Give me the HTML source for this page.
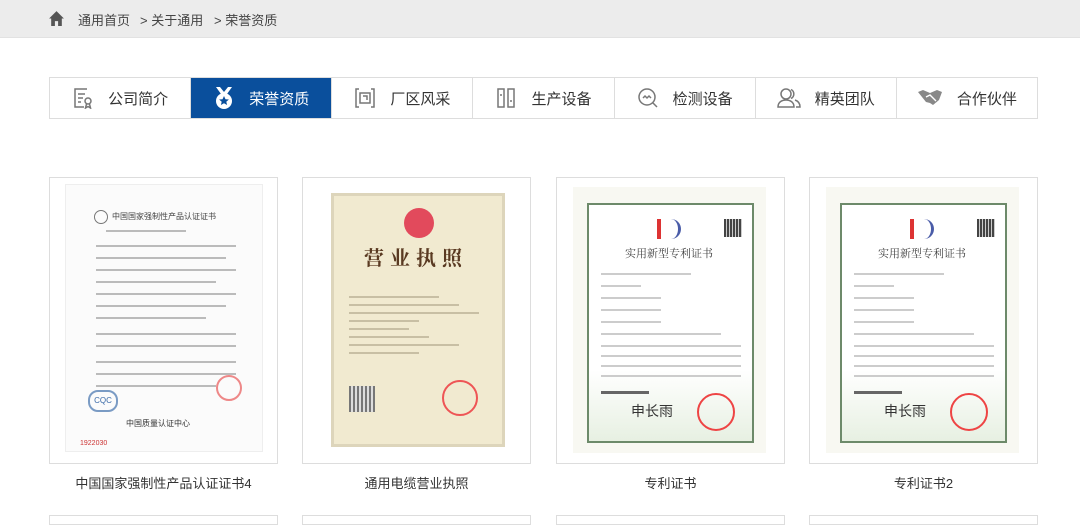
<!DOCTYPE html>
<html><head><meta charset="utf-8"><style>
*{margin:0;padding:0;box-sizing:border-box}
body{width:1080px;height:518px;overflow:hidden;background:#fff;font-family:"Liberation Sans","Noto Sans CJK SC",sans-serif;color:#333;position:relative}
.bc{position:absolute;left:0;top:0;width:1080px;height:38px;background:#ececec;border-bottom:1px solid #e2e2e2}
.bc span{position:absolute;top:10px;font-size:13px;color:#444}
.tabs{position:absolute;left:49px;top:77px;width:989px;height:42px;border:1px solid #ddd;display:flex}
.tab{flex:1;border-right:1px solid #ddd;display:flex;align-items:center;justify-content:center;font-size:15px;color:#333;gap:14px}
.tab:last-child{border-right:none}
.tab.on{background:#0a4f9c;color:#fff}
.card{position:absolute;top:177px;width:229px;height:287px;border:1px solid #ddd;overflow:hidden}
.cap{position:absolute;top:473px;width:229px;text-align:center;font-size:13px;color:#333}
.ln{position:absolute;height:2px;background:#bbb}
.bot{position:absolute;top:515px;width:229px;height:10px;border:1px solid #ddd}
</style></head><body>
<div class="bc">
<svg style="position:absolute;left:48px;top:10px" width="17" height="17" viewBox="0 0 16 16"><path d="M8 1 L1 8 H3 V15 H6.5 V10.5 H9.5 V15 H13 V8 H15 Z" fill="#555"/></svg>
<span style="left:78px">通用首页</span><span style="left:140px">&gt; 关于通用</span><span style="left:214px">&gt; 荣誉资质</span>
</div>
<div class="tabs">
<div class="tab"><svg width="22" height="22" viewBox="0 0 22 22" fill="none" stroke="#777" stroke-width="1.5"><path d="M15 2H3v18h9"/><path d="M6 7h7M6 11h5M6 15h3"/><circle cx="16" cy="14" r="3"/><path d="M14.5 17l-1 4 2.5-1.5 2.5 1.5-1-4"/></svg>公司简介</div>
<div class="tab on"><svg width="22" height="24" viewBox="0 0 22 24"><path d="M3 1l5 7h6l5-7h-4l-4 5-4-5z" fill="#fff"/><circle cx="11" cy="15" r="8" fill="#fff"/><path d="M11 10l1.5 3.2 3.4.3-2.6 2.2.8 3.3-3.1-1.8-3.1 1.8.8-3.3-2.6-2.2 3.4-.3z" fill="#0a4f9c"/></svg>荣誉资质</div>
<div class="tab"><svg width="22" height="22" viewBox="0 0 22 22" fill="none" stroke="#777" stroke-width="1.5"><path d="M5 2H2v18h3M17 2h3v18h-3"/><rect x="6" y="6" width="10" height="10"/><path d="M9 9h4v4"/></svg>厂区风采</div>
<div class="tab"><svg width="22" height="22" viewBox="0 0 22 22" fill="none" stroke="#777" stroke-width="1.5"><rect x="3" y="2" width="6" height="18"/><rect x="13" y="2" width="6" height="18"/><path d="M5 8h2M15 14h2"/></svg>生产设备</div>
<div class="tab"><svg width="22" height="22" viewBox="0 0 22 22" fill="none" stroke="#777" stroke-width="1.5"><circle cx="10" cy="10" r="8"/><path d="M16 16l4 4M6 11l2-2 2 2 2-2 2 2"/></svg>检测设备</div>
<div class="tab"><svg width="24" height="22" viewBox="0 0 24 22" fill="none" stroke="#777" stroke-width="1.5"><circle cx="9" cy="7" r="5"/><path d="M1 20c0-5 4-7 8-7s8 2 8 7z"/><path d="M14 2.5a5 5 0 010 9M18 13c3 1 5 3 5 7h-4"/></svg>精英团队</div>
<div class="tab"><svg width="26" height="20" viewBox="0 0 26 20"><path d="M1 4l5-2 7 3 7-3 5 2-3 8-6 5-3-2-4-1z" fill="#888"/><path d="M9 9l4-2 6 6" stroke="#fff" stroke-width="1.4" fill="none"/></svg>合作伙伴</div>
</div>

<div class="card" style="left:49px">
<div style="position:absolute;left:15px;top:6px;width:198px;height:268px;background:#fbfbfb;border:1px solid #eee">
<div style="position:absolute;left:28px;top:25px;width:14px;height:14px;border-radius:50%;border:1px solid #777"></div>
<div style="position:absolute;left:46px;top:26px;font-size:8px;color:#444">中国国家强制性产品认证证书</div>
<div class="ln" style="left:40px;top:45px;width:80px"></div>
<div class="ln" style="left:30px;top:60px;width:140px"></div><div class="ln" style="left:30px;top:72px;width:130px"></div>
<div class="ln" style="left:30px;top:84px;width:140px"></div><div class="ln" style="left:30px;top:96px;width:120px"></div>
<div class="ln" style="left:30px;top:108px;width:140px"></div><div class="ln" style="left:30px;top:120px;width:130px"></div>
<div class="ln" style="left:30px;top:132px;width:110px"></div><div class="ln" style="left:30px;top:148px;width:140px"></div>
<div class="ln" style="left:30px;top:160px;width:140px"></div><div class="ln" style="left:30px;top:176px;width:140px"></div>
<div class="ln" style="left:30px;top:188px;width:140px"></div><div class="ln" style="left:30px;top:200px;width:120px"></div>
<div style="position:absolute;left:22px;top:205px;width:30px;height:22px;border:2px solid #7a9bc4;border-radius:10px;font-size:8px;color:#3a6aa8;text-align:center;line-height:18px">CQC</div>
<div style="position:absolute;left:150px;top:190px;width:26px;height:26px;border-radius:50%;border:2px solid #e88"></div>
<div style="position:absolute;left:60px;top:233px;font-size:8px;color:#333">中国质量认证中心</div>
<div style="position:absolute;left:14px;top:255px;font-size:7px;color:#c33">1922030</div>
</div></div>

<div class="card" style="left:302px">
<div style="position:absolute;left:28px;top:15px;width:174px;height:254px;background:#f1ead0;border:3px solid #ddd5bb">
<div style="position:absolute;left:70px;top:12px;width:30px;height:30px;border-radius:50%;background:#e24a5c"></div>
<div style="position:absolute;left:30px;top:46px;font-size:20px;font-weight:bold;color:#5a3a22;letter-spacing:6px;font-family:'Noto Serif CJK SC',serif">营业执照</div>
<div class="ln" style="left:15px;top:100px;width:90px;background:#c8bfa4"></div><div class="ln" style="left:15px;top:108px;width:110px;background:#c8bfa4"></div>
<div class="ln" style="left:15px;top:116px;width:130px;background:#c8bfa4"></div><div class="ln" style="left:15px;top:124px;width:70px;background:#c8bfa4"></div>
<div class="ln" style="left:15px;top:132px;width:60px;background:#c8bfa4"></div><div class="ln" style="left:15px;top:140px;width:80px;background:#c8bfa4"></div>
<div class="ln" style="left:15px;top:148px;width:110px;background:#c8bfa4"></div><div class="ln" style="left:15px;top:156px;width:70px;background:#c8bfa4"></div>
<div style="position:absolute;left:15px;top:190px;width:26px;height:26px;background:repeating-linear-gradient(90deg,#777 0 2px,#ddd 2px 4px)"></div>
<div style="position:absolute;left:108px;top:184px;width:36px;height:36px;border-radius:50%;border:2px solid #e55"></div>
</div></div>

<div class="card" style="left:556px">
<div style="position:absolute;left:16px;top:9px;width:193px;height:266px;background:#f8f8f2">
<div style="position:absolute;left:14px;top:16px;width:167px;height:240px;border:2px solid #6d8a6a;background:linear-gradient(#fff 70%,#e7f0e2)">
<div style="position:absolute;left:68px;top:14px;width:24px;height:20px;border-left:4px solid #d33;border-radius:0 12px 12px 0;border-right:3px solid #4a5ca8"></div>
<div style="position:absolute;right:10px;top:14px;width:18px;height:18px;background:repeating-linear-gradient(90deg,#444 0 2px,#ccc 2px 3px)"></div>
<div style="position:absolute;left:36px;top:40px;font-size:11px;color:#444;font-family:'Noto Serif CJK SC',serif">实用新型专利证书</div>
<div class="ln" style="left:12px;top:68px;width:90px;background:#ccc"></div><div class="ln" style="left:12px;top:80px;width:40px;background:#ccc"></div>
<div class="ln" style="left:12px;top:92px;width:60px;background:#ccc"></div><div class="ln" style="left:12px;top:104px;width:60px;background:#ccc"></div>
<div class="ln" style="left:12px;top:116px;width:60px;background:#ccc"></div><div class="ln" style="left:12px;top:128px;width:120px;background:#ccc"></div>
<div class="ln" style="left:12px;top:140px;width:140px;background:#ccc"></div><div class="ln" style="left:12px;top:150px;width:140px;background:#ccc"></div>
<div class="ln" style="left:12px;top:160px;width:140px;background:#ccc"></div><div class="ln" style="left:12px;top:170px;width:140px;background:#ccc"></div>
<div style="position:absolute;left:12px;top:186px;width:48px;height:3px;background:#666"></div>
<div style="position:absolute;left:42px;top:196px;font-size:14px;color:#333">申长雨</div>
<div style="position:absolute;left:108px;top:188px;width:38px;height:38px;border-radius:50%;border:2px solid #e44"></div>
</div></div></div>

<div class="card" style="left:809px">
<div style="position:absolute;left:16px;top:9px;width:193px;height:266px;background:#f8f8f2">
<div style="position:absolute;left:14px;top:16px;width:167px;height:240px;border:2px solid #6d8a6a;background:linear-gradient(#fff 70%,#e7f0e2)">
<div style="position:absolute;left:68px;top:14px;width:24px;height:20px;border-left:4px solid #d33;border-radius:0 12px 12px 0;border-right:3px solid #4a5ca8"></div>
<div style="position:absolute;right:10px;top:14px;width:18px;height:18px;background:repeating-linear-gradient(90deg,#444 0 2px,#ccc 2px 3px)"></div>
<div style="position:absolute;left:36px;top:40px;font-size:11px;color:#444;font-family:'Noto Serif CJK SC',serif">实用新型专利证书</div>
<div class="ln" style="left:12px;top:68px;width:90px;background:#ccc"></div><div class="ln" style="left:12px;top:80px;width:40px;background:#ccc"></div>
<div class="ln" style="left:12px;top:92px;width:60px;background:#ccc"></div><div class="ln" style="left:12px;top:104px;width:60px;background:#ccc"></div>
<div class="ln" style="left:12px;top:116px;width:60px;background:#ccc"></div><div class="ln" style="left:12px;top:128px;width:120px;background:#ccc"></div>
<div class="ln" style="left:12px;top:140px;width:140px;background:#ccc"></div><div class="ln" style="left:12px;top:150px;width:140px;background:#ccc"></div>
<div class="ln" style="left:12px;top:160px;width:140px;background:#ccc"></div><div class="ln" style="left:12px;top:170px;width:140px;background:#ccc"></div>
<div style="position:absolute;left:12px;top:186px;width:48px;height:3px;background:#666"></div>
<div style="position:absolute;left:42px;top:196px;font-size:14px;color:#333">申长雨</div>
<div style="position:absolute;left:108px;top:188px;width:38px;height:38px;border-radius:50%;border:2px solid #e44"></div>
</div></div></div>

<div class="cap" style="left:49px">中国国家强制性产品认证证书4</div>
<div class="cap" style="left:302px">通用电缆营业执照</div>
<div class="cap" style="left:556px">专利证书</div>
<div class="cap" style="left:809px">专利证书2</div>
<div class="bot" style="left:49px"></div><div class="bot" style="left:302px"></div><div class="bot" style="left:556px"></div><div class="bot" style="left:809px"></div>
</body></html>
